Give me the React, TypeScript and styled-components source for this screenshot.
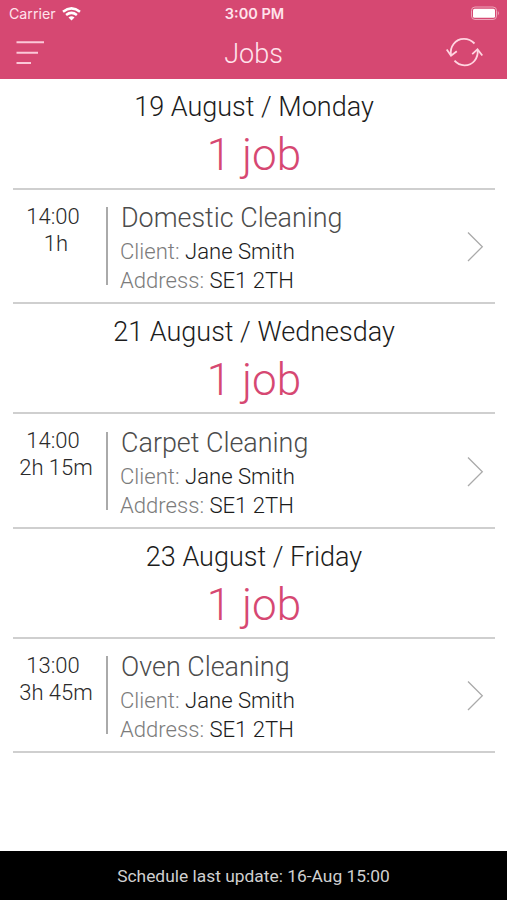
import React from "react";
import styled, { createGlobalStyle } from "styled-components";

const GlobalStyle = createGlobalStyle`
  *, *::before, *::after { box-sizing: border-box; }
  body {
    margin: 0;
    background: #fff;
    font-family: Roboto, "Liberation Sans", sans-serif;
    font-weight: 300;
  }
`;

const Screen = styled.div`
  width: 507px;
  height: 900px;
  display: flex;
  flex-direction: column;
  overflow: hidden;
  background: #fff;
`;

const Header = styled.header`
  height: 79px;
  flex: none;
  background: #d64872;
  color: #ffe3ec;
`;

const StatusBar = styled.div`
  height: 27px;
  display: grid;
  grid-template-columns: 1fr auto 1fr;
  align-items: center;
  padding: 0 7px 0 9px;
  font-family: Inter, "Liberation Sans", sans-serif;
`;

const Carrier = styled.div`
  display: flex;
  align-items: center;
  gap: 6px;
  font-size: 14.2px;
  font-weight: 400;
`;

const Clock = styled.div`
  font-size: 14.5px;
  font-weight: 600;
`;

const BatterySlot = styled.div`
  display: flex;
  justify-content: flex-end;
`;

const NavBar = styled.div`
  height: 52px;
  display: grid;
  grid-template-columns: 1fr auto 1fr;
  align-items: center;
  padding: 0 24px 0 16px;
`;

const IconButton = styled.button<{ $end?: boolean }>`
  display: flex;
  padding: 0;
  border: 0;
  background: none;
  color: inherit;
  justify-self: ${(p) => (p.$end ? "end" : "start")};
`;

const PageTitle = styled.h1`
  margin: 0;
  padding: 1px 0 0 8px;
  font-size: 27px;
  line-height: 32px;
  font-weight: 300;
`;

const Schedule = styled.main`
  flex: 1;
  padding: 0 12px 0 13px;
`;

const DayHeading = styled.div`
  height: 110.5px;
  display: flex;
  flex-direction: column;
  align-items: center;
  padding-top: 12px;
  border-bottom: 2px solid #cfcfcf;
`;

const DayDate = styled.h2`
  margin: 0;
  font-size: 27px;
  line-height: 32px;
  font-weight: 300;
  color: #1c1c1c;
  white-space: nowrap;
`;

const JobCount = styled.div`
  margin-top: 6px;
  font-size: 44px;
  line-height: 52px;
  color: #d64872;
`;

const JobRow = styled.article`
  height: 114.3px;
  display: grid;
  grid-template-columns: 93px 2px 1fr 17px;
  padding: 16.4px 11px 0 0;
  border-bottom: 2px solid #cfcfcf;
`;

const JobTime = styled.div`
  margin-top: -3.4px;
  font-size: 22px;
  line-height: 27px;
  text-align: center;
  white-space: nowrap;
  color: #2a2a2a;
`;

const StartTime = styled.div`
  padding-right: 13px;
`;

const Duration = styled.div`
  padding-right: 7px;
`;

const Divider = styled.div`
  height: 78px;
  margin-top: 1px;
  background: #aaa;
`;

const JobInfo = styled.div`
  padding-left: 12px;
  white-space: nowrap;
`;

const JobName = styled.h3`
  margin: -4px 0 3px 1px;
  font-size: 26.9px;
  line-height: 32px;
  font-weight: 300;
  color: #4c4c4c;
`;

const Detail = styled.div`
  font-size: 22.1px;
  line-height: 29px;
  color: #7c7c7c;
`;

const DetailValue = styled.span`
  color: #1c1c1c;
`;

const ChevronSlot = styled.div`
  padding-top: 25px;
`;

const Footer = styled.footer`
  height: 49px;
  flex: none;
  display: flex;
  align-items: center;
  justify-content: center;
  padding-top: 1px;
  background: #000;
  color: #d0d0d0;
  font-size: 17.4px;
  font-weight: 400;
`;

const WifiIcon = () => (
  <svg width="19" height="14" viewBox="0 0 19 14" fill="none" stroke="#fff" strokeWidth="2.5">
    <path d="M1 4.8 Q9.5 -2 18 4.8" />
    <path d="M4.1 8 Q9.5 3.7 14.9 8" />
    <path d="M6.5 10.5 Q9.5 8.1 12.5 10.5 L9.5 13.5 Z" fill="#fff" stroke="none" />
  </svg>
);

const BatteryIcon = () => (
  <svg width="30" height="15" viewBox="0 0 30 15">
    <rect x="1.5" y="1" width="25" height="12.5" rx="3.5" fill="none" stroke="#eda4ba" />
    <rect x="3" y="2.7" width="22" height="9" rx="1.5" fill="#fff" />
    <path d="M27.8 5 Q30 7.2 27.8 9.4 Z" fill="#eda4ba" />
  </svg>
);

const MenuIcon = () => (
  <svg width="28" height="24" viewBox="0 0 28 24" stroke="#fbc8d8" strokeWidth="2">
    <path d="M.5 1.3H28M.5 11.7H22M.5 22.1H15" />
  </svg>
);

const RefreshIcon = () => (
  <svg width="37" height="30" viewBox="0 0 37 30" fill="none" stroke="#ffd5e1" strokeWidth="1.8">
    <path d="M5 17 C3.6 9 9 .9 18 .9 Q24 .9 28.5 5.5" />
    <path d="M.7 11.5 L5 17.6 L10.8 13.2" />
    <path d="M8.5 22.7 Q12.5 27.2 18.5 27.4 C27 27.4 32.5 20 31.6 12" />
    <path d="M26.2 16.2 L31.5 11.4 L36.3 17.5" />
  </svg>
);

const ChevronIcon = () => (
  <svg width="17" height="32" viewBox="0 0 17 32" fill="none" stroke="#aaa" strokeWidth="1.3">
    <path d="M1 1.5 L15.3 15.7 L1 30" />
  </svg>
);

const days = [
  { date: "19 August / Monday", time: "14:00", length: "1h", job: "Domestic Cleaning" },
  { date: "21 August / Wednesday", time: "14:00", length: "2h 15m", job: "Carpet Cleaning" },
  { date: "23 August / Friday", time: "13:00", length: "3h 45m", job: "Oven Cleaning" },
];

export default function App() {
  return (
    <>
      <GlobalStyle />
      <Screen>
        <Header>
          <StatusBar>
            <Carrier>
              Carrier
              <WifiIcon />
            </Carrier>
            <Clock>3:00 PM</Clock>
            <BatterySlot>
              <BatteryIcon />
            </BatterySlot>
          </StatusBar>
          <NavBar>
            <IconButton aria-label="Menu">
              <MenuIcon />
            </IconButton>
            <PageTitle>Jobs</PageTitle>
            <IconButton $end aria-label="Refresh">
              <RefreshIcon />
            </IconButton>
          </NavBar>
        </Header>
        <Schedule>
          {days.map((day) => (
            <section key={day.date}>
              <DayHeading>
                <DayDate>{day.date}</DayDate>
                <JobCount>1 job</JobCount>
              </DayHeading>
              <JobRow>
                <JobTime>
                  <StartTime>{day.time}</StartTime>
                  <Duration>{day.length}</Duration>
                </JobTime>
                <Divider />
                <JobInfo>
                  <JobName>{day.job}</JobName>
                  <Detail>
                    Client: <DetailValue>Jane Smith</DetailValue>
                  </Detail>
                  <Detail>
                    Address: <DetailValue>SE1 2TH</DetailValue>
                  </Detail>
                </JobInfo>
                <ChevronSlot>
                  <ChevronIcon />
                </ChevronSlot>
              </JobRow>
            </section>
          ))}
        </Schedule>
        <Footer>Schedule last update: 16-Aug 15:00</Footer>
      </Screen>
    </>
  );
}
